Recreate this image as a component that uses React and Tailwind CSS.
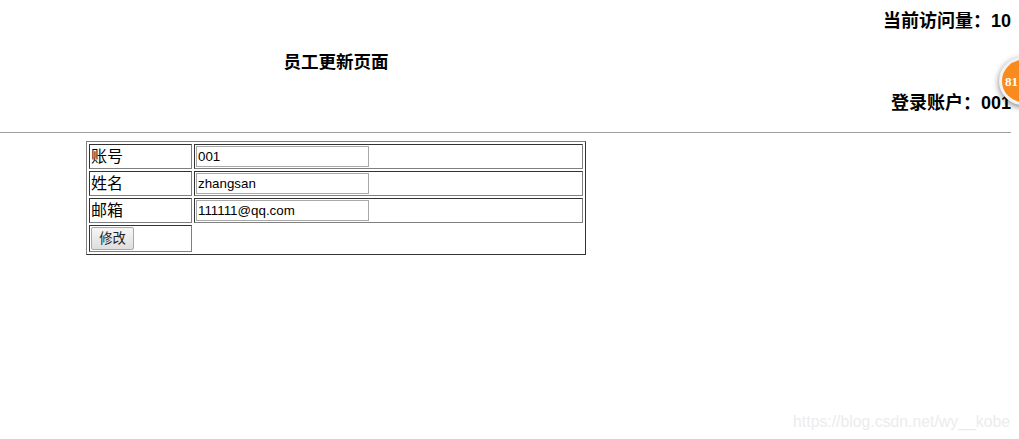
const fontStack = "font-['Liberation_Sans','Noto_Sans_CJK_SC',sans-serif]";

const rows = [
  { label: '账号', value: '001' },
  { label: '姓名', value: 'zhangsan' },
  { label: '邮箱', value: '111111@qq.com' },
];

const cellBorder = 'border border-t-[#333333] border-l-[#333333] border-r-[#808080] border-b-[#808080] p-px';

export default function App() {
  return (
    <div className={`relative h-[439px] w-[1019px] overflow-hidden bg-white text-black ${fontStack}`}>
      {/* Header */}
      <div className="grid h-[132px] w-[1011px] grid-cols-[672px_1fr]">
        <div className="flex items-center justify-center pb-[8px] text-[17.5px] leading-[24px] font-bold">
          员工更新页面
        </div>
        <div className="flex flex-col items-end justify-between pt-[9px] pb-[17px] text-[18px] leading-[24px] font-bold">
          <div>当前访问量：10</div>
          <div>登录账户：001</div>
        </div>
      </div>
      <div className="h-px w-[1011px] bg-[#a0a0a0]" />

      {/* Form table */}
      <table className="mt-[8px] ml-[86px] w-[500px] table-fixed border-separate border-spacing-[2px] border border-t-[#808080] border-l-[#808080] border-r-[#333333] border-b-[#333333]">
        <colgroup>
          <col className="w-[103px]" />
          <col />
        </colgroup>
        <tbody>
          {rows.map((row) => (
            <tr key={row.label}>
              <td className={`${cellBorder} h-[25px] text-[16px] leading-[21px]`}>{row.label}</td>
              <td className={cellBorder}>
                <input
                  defaultValue={row.value}
                  className="block h-[21px] w-[173px] border border-[#a9a9a9] px-px text-[13.33px] text-black outline-none"
                />
              </td>
            </tr>
          ))}
          <tr>
            <td className={`${cellBorder} h-[27px]`}>
              <button className="block h-[23px] w-[43px] rounded-[2px] border border-[#a9a9a9] bg-gradient-to-b from-[#f6f6f6] to-[#dedede] text-[13.33px] leading-[21px] text-[#222222]">
                修改
              </button>
            </td>
            <td />
          </tr>
        </tbody>
      </table>

      {/* Floating badge */}
      <div className="absolute top-[57px] left-[999px] flex h-[48px] w-[48px] items-center rounded-full border-[3px] border-[#f2f2f2] bg-[#f98a1e] pl-[3px] shadow-[0_2px_6px_rgba(0,0,0,0.5)]">
        <span className="font-['Liberation_Serif',serif] text-[13px] leading-none font-bold text-white">81</span>
      </div>

      {/* Watermark */}
      <div className="absolute top-[413px] right-[9px] text-[15.8px] leading-[18px] text-[#ececec]">
        https://blog.csdn.net/wy__kobe
      </div>
    </div>
  );
}
